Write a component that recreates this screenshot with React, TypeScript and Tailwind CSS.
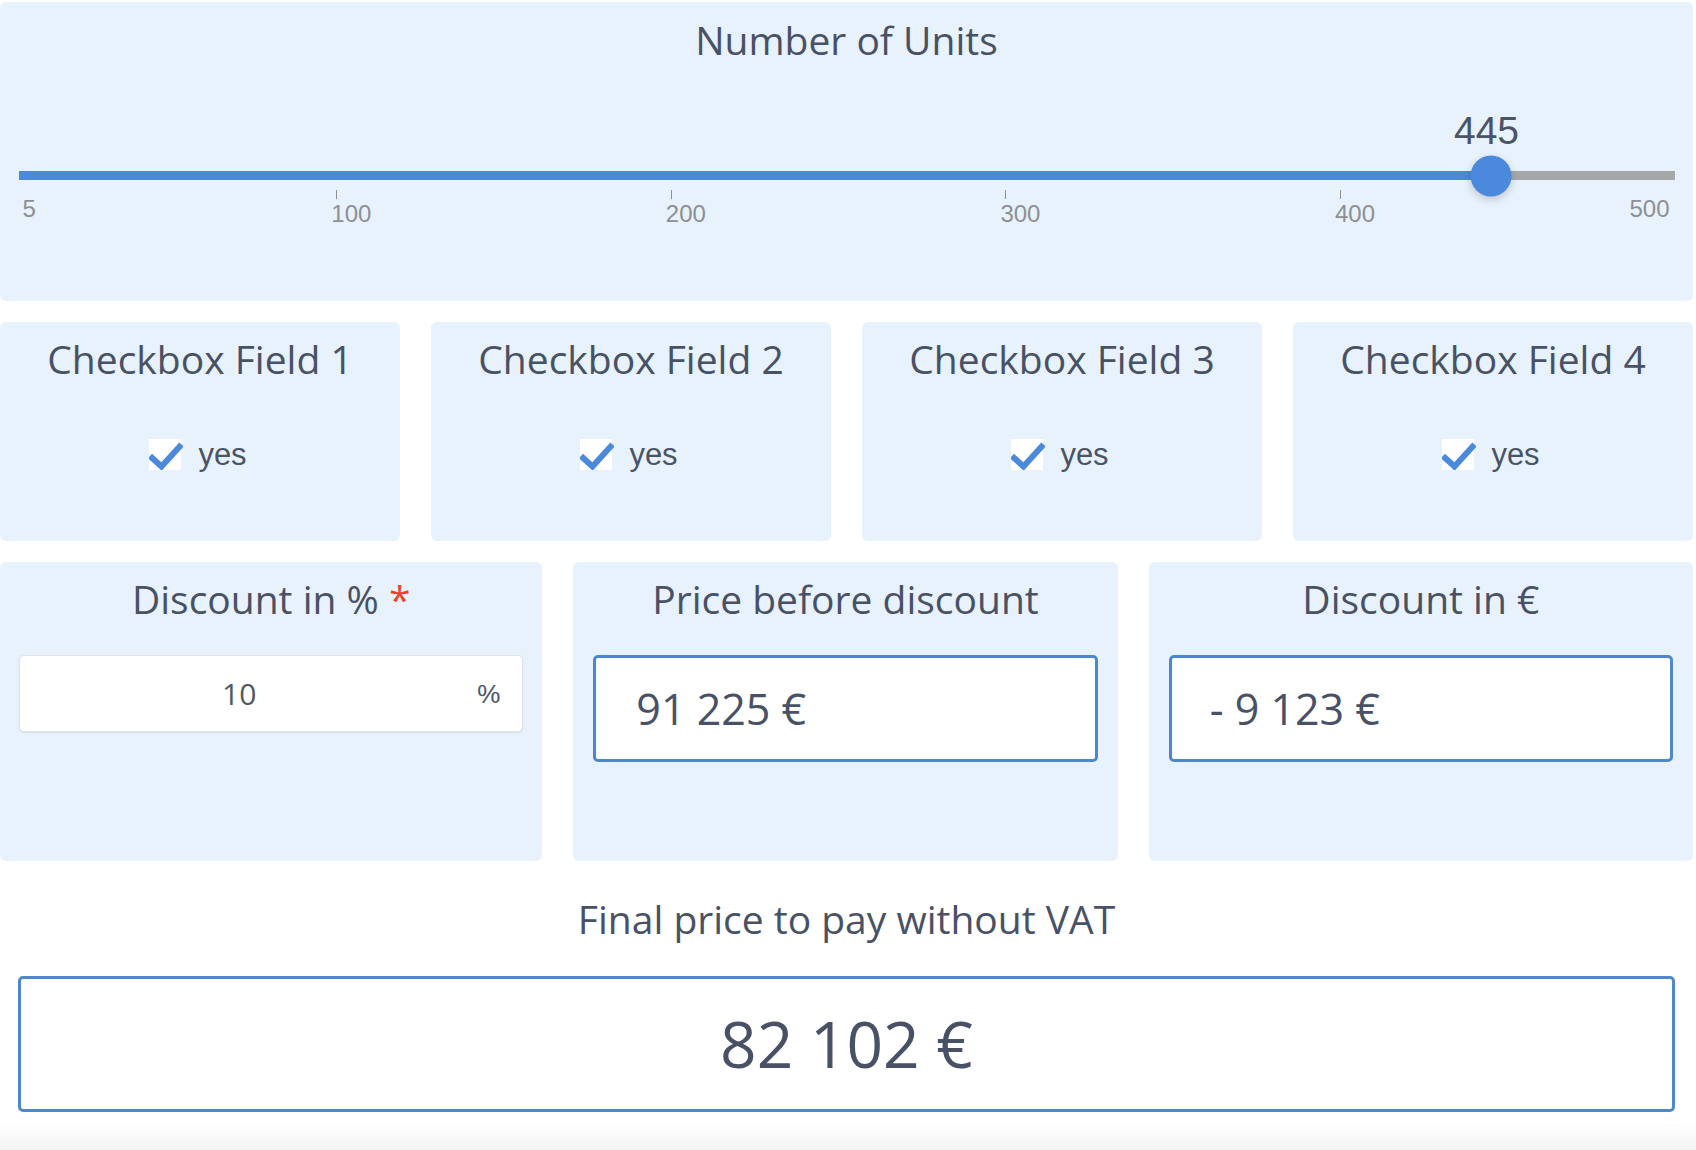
import React from "react";

const title = "font-['Open_Sans',_'Noto_Sans',_sans-serif] text-[#485165]";
const arial = "font-['Liberation_Sans',_Arial,_sans-serif]";

function Check() {
  return (
    <div className="relative w-[32px] h-[31px] bg-white">
      <svg
        className="absolute left-0 top-0"
        width="34"
        height="31"
        viewBox="0 0 34 31"
        fill="none"
      >
        <path d="M1 17 L12.5 27.5 L32.5 5.5" stroke="#4a89dc" strokeWidth="6" strokeLinecap="butt" strokeLinejoin="miter" />
      </svg>
    </div>
  );
}

function CheckboxCard({ n }: { n: number }) {
  return (
    <div className="flex-1 h-[219px] bg-[#e8f2fc] rounded-[6px] flex flex-col items-center pt-[17px]">
      <div className={`${title} text-[39px] leading-none`}>Checkbox Field {n}</div>
      <div className="mt-[61px] flex items-center gap-[17px] pr-[4px]">
        <Check />
        <span className={`${arial} text-[31px] leading-none text-[#4b5467]`}>yes</span>
      </div>
    </div>
  );
}

const ticks = [100, 200, 300, 400];
const pct = (v: number) => ((v - 5) / 495) * 100;

export default function App() {
  const value = 445;
  return (
    <div className="w-[1696px] h-[1150px] bg-white flex flex-col">
      <div className="w-[1693px] flex flex-col">
        {/* Slider panel */}
        <div className="mt-[2px] h-[299px] bg-[#e8f2fc] rounded-[6px] flex flex-col items-center pt-[18px]">
          <div className={`${title} text-[39px] leading-none`}>Number of Units</div>
          <div className="w-[1656px] mt-[52px] flex flex-col">
            <div className="relative h-[38px]">
              <span
                className={`absolute top-0 -translate-x-1/2 ml-[-4px] ${arial} text-[39px] leading-none text-[#4b5467]`}
                style={{ left: `${pct(value)}%` }}
              >
                {value}
              </span>
            </div>
            <div className="relative mt-[22px] h-[9px] bg-[#a6a7a9]">
              <div className="h-full bg-[#4a89dc]" style={{ width: `${pct(value)}%` }} />
              <div
                className="absolute top-1/2 w-[41px] h-[41px] -translate-x-1/2 -translate-y-1/2 rounded-full bg-[#4a89dc] shadow-[0_3px_8px_rgba(0,0,0,0.18)]"
                style={{ left: `${pct(value)}%` }}
              />
            </div>
            <div className={`relative h-[60px] ${arial} text-[24px] leading-none text-[#8e8f93]`}>
              <span className="absolute left-[4px] top-[17px]">5</span>
              <span className="absolute right-[5px] top-[17px]">500</span>
              {ticks.map((t) => (
                <div key={t} className="absolute top-[10px]" style={{ left: `${pct(t)}%` }}>
                  <div className="w-[1px] h-[9px] bg-[#8e8f93]" />
                  <span className="absolute left-[-5px] top-[12px]">{t}</span>
                </div>
              ))}
            </div>
          </div>
        </div>

        {/* Checkbox row */}
        <div className="mt-[21px] flex gap-[31px]">
          {[1, 2, 3, 4].map((n) => (
            <CheckboxCard key={n} n={n} />
          ))}
        </div>

        {/* Discount row */}
        <div className="mt-[21px] flex gap-[31px]">
          <div className="flex-1 h-[299px] bg-[#e8f2fc] rounded-[6px] flex flex-col items-center pt-[17px] px-[19px]">
            <div className={`${title} text-[39px] leading-none`}>
              Discount in % <span className="text-[#e8452c]">*</span>
            </div>
            <div className="mt-[37px] w-full h-[77px] bg-white rounded-[5px] border border-[#dfe3e8] shadow-[0_1px_2px_rgba(0,0,0,0.08)] flex items-center">
              <span className="flex-1 text-center pr-[10px] font-['Open_Sans',_sans-serif] text-[30px] leading-none text-[#53575e]">10</span>
              <span className={`${arial} w-[54px] pr-[22px] text-right text-[26px] leading-none text-[#4b5467]`}>%</span>
            </div>
          </div>
          <div className="flex-1 h-[299px] bg-[#e8f2fc] rounded-[6px] flex flex-col items-center pt-[17px] px-[20px]">
            <div className={`${title} text-[39px] leading-none`}>Price before discount</div>
            <div className="mt-[37px] w-full h-[107px] bg-white rounded-[5px] border-[3px] border-[#4f87cf] flex items-center pl-[40px]">
              <span className={`${title} text-[43px] leading-none font-medium`}>91 225 €</span>
            </div>
          </div>
          <div className="flex-1 h-[299px] bg-[#e8f2fc] rounded-[6px] flex flex-col items-center pt-[17px] px-[20px]">
            <div className={`${title} text-[39px] leading-none`}>Discount in €</div>
            <div className="mt-[37px] w-full h-[107px] bg-white rounded-[5px] border-[3px] border-[#4f87cf] flex items-center pl-[38px]">
              <span className={`${title} text-[43px] leading-none font-medium`}>- 9 123 €</span>
            </div>
          </div>
        </div>

        {/* Final price */}
        <div className="mt-[38px] flex flex-col items-center px-[18px]">
          <div className={`${title} text-[39px] leading-none`}>Final price to pay without VAT</div>
          <div className="mt-[38px] w-full h-[136px] bg-white rounded-[5px] border-[3px] border-[#4f87cf] flex items-center justify-center">
            <span className={`${title} text-[64px] leading-none font-medium`}>82 102 €</span>
          </div>
        </div>
      </div>
      <div className="mt-auto h-[26px] bg-gradient-to-b from-white to-[#f3f3f3]" />
    </div>
  );
}
